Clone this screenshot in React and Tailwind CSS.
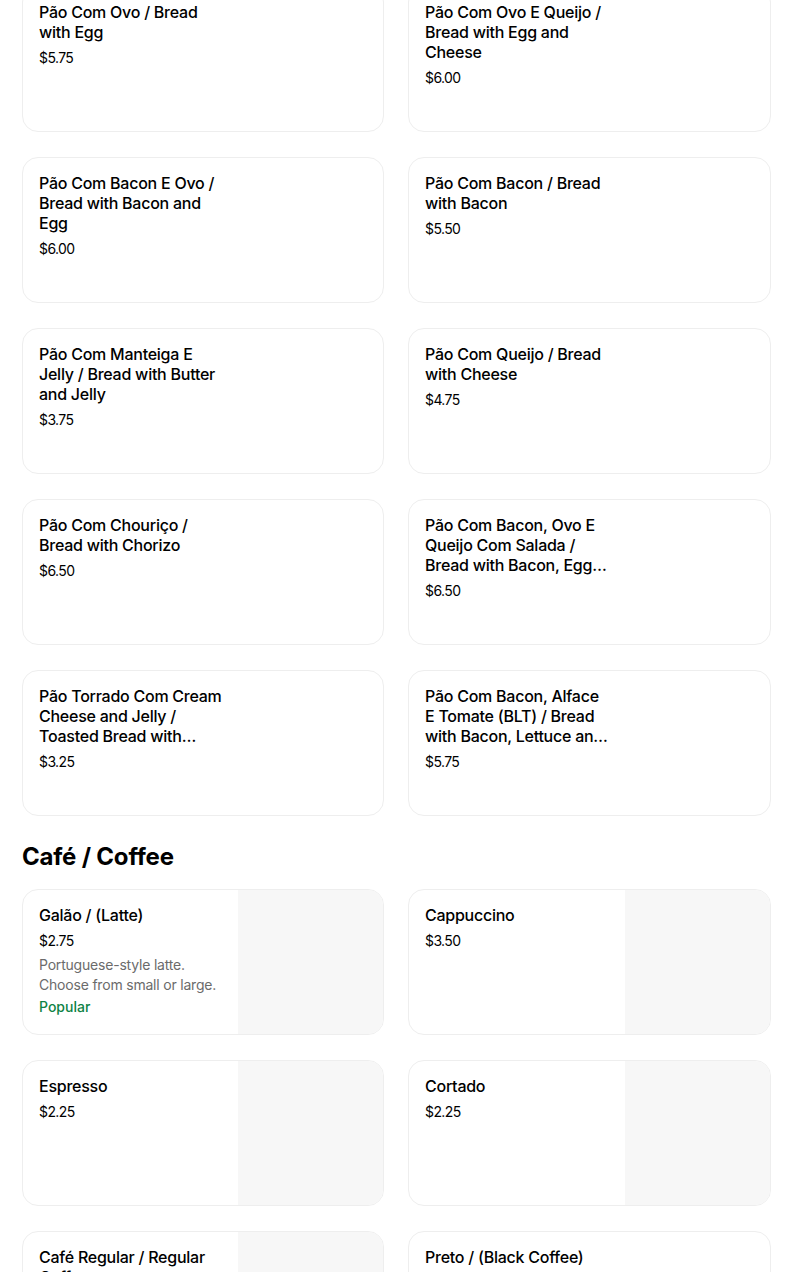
import React from "react";

const breakfast = [
  { t: "Pão Com Ovo / Bread with Egg", p: "$5.75" },
  { t: "Pão Com Ovo E Queijo / Bread with Egg and Cheese", p: "$6.00" },
  { t: "Pão Com Bacon E Ovo / Bread with Bacon and Egg", p: "$6.00" },
  { t: "Pão Com Bacon / Bread with Bacon", p: "$5.50" },
  { t: "Pão Com Manteiga E Jelly / Bread with Butter and Jelly", p: "$3.75" },
  { t: "Pão Com Queijo / Bread with Cheese", p: "$4.75" },
  { t: "Pão Com Chouriço / Bread with Chorizo", p: "$6.50" },
  { t: "Pão Com Bacon, Ovo E Queijo Com Salada / Bread with Bacon, Egg and Cheese with Salad", p: "$6.50" },
  { t: "Pão Torrado Com Cream Cheese and Jelly / Toasted Bread with Cream Cheese and Jelly", p: "$3.25" },
  { t: "Pão Com Bacon, Alface E Tomate (BLT) / Bread with Bacon, Lettuce and Tomato", p: "$5.75" },
];

const coffee = [
  { t: "Galão / (Latte)", p: "$2.75", d: "Portuguese-style latte. Choose from small or large.", popular: true, img: true },
  { t: "Cappuccino", p: "$3.50", img: true },
  { t: "Espresso", p: "$2.25", img: true },
  { t: "Cortado", p: "$2.25", img: true },
  { t: "Café Regular / Regular Coffee", p: "$2.00", img: true },
  { t: "Preto / (Black Coffee)", p: "$2.00", img: false },
];

function Card({ item }) {
  return (
    <div className="flex h-[146px] overflow-hidden rounded-2xl border border-[#eeeeee] bg-white">
      <div className="w-[215px] shrink-0 pl-4 pt-[15px] pr-3">
        <div className="line-clamp-3 text-[16px] font-medium leading-5 tracking-[-0.25px] text-black">{item.t}</div>
        <div className="mt-[6px] text-[14px] leading-5 tracking-[-0.6px] text-black">{item.p}</div>
        {item.d && (
          <div className="mt-1 text-[14px] leading-5 tracking-[-0.2px] text-[#6b6b6b]">{item.d}</div>
        )}
        {item.popular && (
          <div className="mt-0.5 text-[14px] font-medium leading-5 text-[#0e8345]">Popular</div>
        )}
      </div>
      <div className="flex-1" />
      {item.img && <div className="w-[145px] shrink-0 bg-[#f7f7f7]" />}
    </div>
  );
}

export default function App() {
  return (
    <div className="min-h-screen bg-white" style={{ fontFamily: "Inter, 'Noto Sans', sans-serif" }}>
      <div className="-mt-[14px] px-[22px]">
        <div className="grid grid-cols-[362px_363px] gap-x-[24px] gap-y-[25px]">
          {breakfast.map((it, i) => (
            <Card key={i} item={it} />
          ))}
        </div>
        <h2 className="pt-[25px] pb-4 text-[24px] font-bold leading-8 tracking-[-0.2px] text-black">Café / Coffee</h2>
        <div className="grid grid-cols-[362px_363px] gap-x-[24px] gap-y-[25px]">
          {coffee.map((it, i) => (
            <Card key={i} item={it} />
          ))}
        </div>
      </div>
    </div>
  );
}
